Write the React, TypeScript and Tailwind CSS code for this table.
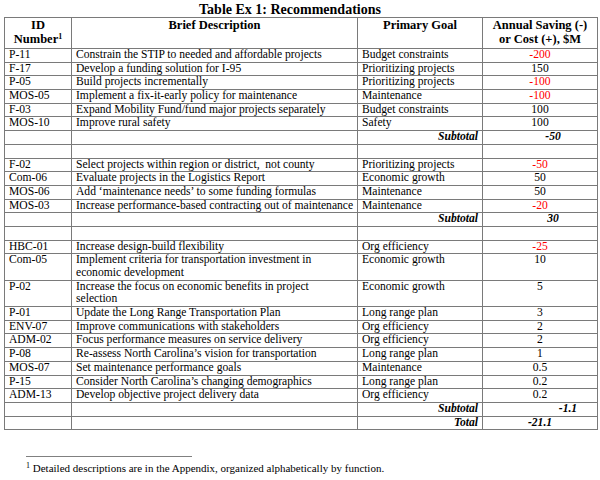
import React from 'react';

type Row =
    | { kind: 'item'; id: string; desc: string; goal: string; val: string; red?: boolean; tall?: boolean }
    | { kind: 'sub'; label: string; val: string; valClass: string }
    | { kind: 'blank' };

const rows: Row[] = [
    { kind: 'item', id: 'P-11', desc: 'Constrain the STIP to needed and affordable projects', goal: 'Budget constraints', val: '-200', red: true },
    { kind: 'item', id: 'F-17', desc: 'Develop a funding solution for I-95', goal: 'Prioritizing projects', val: '150' },
    { kind: 'item', id: 'P-05', desc: 'Build projects incrementally', goal: 'Prioritizing projects', val: '-100', red: true },
    { kind: 'item', id: 'MOS-05', desc: 'Implement a fix-it-early policy for maintenance', goal: 'Maintenance', val: '-100', red: true },
    { kind: 'item', id: 'F-03', desc: 'Expand Mobility Fund/fund major projects separately', goal: 'Budget constraints', val: '100' },
    { kind: 'item', id: 'MOS-10', desc: 'Improve rural safety', goal: 'Safety', val: '100' },
    { kind: 'sub', label: 'Subtotal', val: '-50', valClass: 'text-center pl-[30px]' },
    { kind: 'blank' },
    { kind: 'item', id: 'F-02', desc: 'Select projects within region or district,  not county', goal: 'Prioritizing projects', val: '-50', red: true },
    { kind: 'item', id: 'Com-06', desc: 'Evaluate projects in the Logistics Report', goal: 'Economic growth', val: '50' },
    { kind: 'item', id: 'MOS-06', desc: 'Add \u2018maintenance needs\u2019 to some funding formulas', goal: 'Maintenance', val: '50' },
    { kind: 'item', id: 'MOS-03', desc: 'Increase performance-based contracting out of maintenance', goal: 'Maintenance', val: '-20', red: true },
    { kind: 'sub', label: 'Subtotal', val: '30', valClass: 'text-center pl-[30px]' },
    { kind: 'blank' },
    { kind: 'item', id: 'HBC-01', desc: 'Increase design-build flexibility', goal: 'Org efficiency', val: '-25', red: true },
    { kind: 'item', id: 'Com-05', desc: 'Implement criteria for transportation investment in economic development', goal: 'Economic growth', val: '10', tall: true },
    { kind: 'item', id: 'P-02', desc: 'Increase the focus on economic benefits in project selection', goal: 'Economic growth', val: '5', tall: true },
    { kind: 'item', id: 'P-01', desc: 'Update the Long Range Transportation Plan', goal: 'Long range plan', val: '3' },
    { kind: 'item', id: 'ENV-07', desc: 'Improve communications with stakeholders', goal: 'Org efficiency', val: '2' },
    { kind: 'item', id: 'ADM-02', desc: 'Focus performance measures on service delivery', goal: 'Org efficiency', val: '2' },
    { kind: 'item', id: 'P-08', desc: 'Re-assess North Carolina\u2019s vision for transportation', goal: 'Long range plan', val: '1' },
    { kind: 'item', id: 'MOS-07', desc: 'Set maintenance performance goals', goal: 'Maintenance', val: '0.5' },
    { kind: 'item', id: 'P-15', desc: 'Consider North Carolina\u2019s changing demographics', goal: 'Long range plan', val: '0.2' },
    { kind: 'item', id: 'ADM-13', desc: 'Develop objective project delivery data', goal: 'Org efficiency', val: '0.2' },
    { kind: 'sub', label: 'Subtotal', val: '-1.1', valClass: 'text-center pl-[60px]' },
    { kind: 'sub', label: 'Total', val: '-21.1', valClass: 'text-center' },
];

const cell = 'border border-[#7a7a7a] px-[4px] py-0 leading-[12.68px] align-top';

export default function App() {
    return (
        <div className="w-[600px] h-[480px] bg-white text-black overflow-hidden font-['Liberation_Serif','Times_New_Roman',serif]">
            <h1 className="text-center font-bold text-[14px] leading-[15px] pt-[2px] pr-[20px]">
                Table Ex 1: Recommendations
            </h1>
            <table className="table-fixed border-collapse ml-[4px] w-[593px] text-[11.6px]">
                <colgroup>
                    <col className="w-[67px]" />
                    <col className="w-[286px]" />
                    <col className="w-[125px]" />
                    <col className="w-[115px]" />
                </colgroup>
                <thead>
                    <tr className="text-[12.5px] font-bold">
                        <th className="border border-[#7a7a7a] px-[2px] pt-0 pb-[2px] h-[31px] leading-[14px] align-top text-center">
                            ID<br />Number<sup className="text-[8px]">1</sup>
                        </th>
                        <th className="border border-[#7a7a7a] px-[2px] leading-[14px] align-top text-center">Brief Description</th>
                        <th className="border border-[#7a7a7a] px-[2px] leading-[14px] align-top text-center">Primary Goal</th>
                        <th className="border border-[#7a7a7a] px-[2px] leading-[14px] align-top text-center">
                            Annual Saving (-)<br />or Cost (+), $M
                        </th>
                    </tr>
                </thead>
                <tbody>
                    {rows.map((r, i) => {
                        if (r.kind === 'blank') {
                            return (
                                <tr key={i}>
                                    <td className={cell}>&nbsp;</td>
                                    <td className={cell}>&nbsp;</td>
                                    <td className={cell}>&nbsp;</td>
                                    <td className={cell}>&nbsp;</td>
                                </tr>
                            );
                        }
                        if (r.kind === 'sub') {
                            return (
                                <tr key={i} className="font-bold italic">
                                    <td className={cell}>&nbsp;</td>
                                    <td className={cell}>&nbsp;</td>
                                    <td className={cell + ' text-right'}>{r.label}</td>
                                    <td className={cell + ' ' + r.valClass}>{r.val}</td>
                                </tr>
                            );
                        }
                        return (
                            <tr key={i}>
                                <td className={cell}>{r.id}</td>
                                <td className={cell + (r.tall ? ' whitespace-pre-wrap pr-[40px]' : ' whitespace-pre overflow-hidden')}>{r.desc}</td>
                                <td className={cell}>{r.goal}</td>
                                <td className={cell + ' text-center' + (r.red ? ' text-[#ff0000]' : '')}>{r.val}</td>
                            </tr>
                        );
                    })}
                </tbody>
            </table>
            <div className="mt-[26px] ml-[26px] w-[166px] border-t border-[#808080]" />
            <p className="ml-[26px] mt-[5px] text-[11px] leading-[13px]">
                <sup className="text-[8px]">1</sup> Detailed descriptions are in the Appendix, organized alphabetically by function.
            </p>
        </div>
    );
}
